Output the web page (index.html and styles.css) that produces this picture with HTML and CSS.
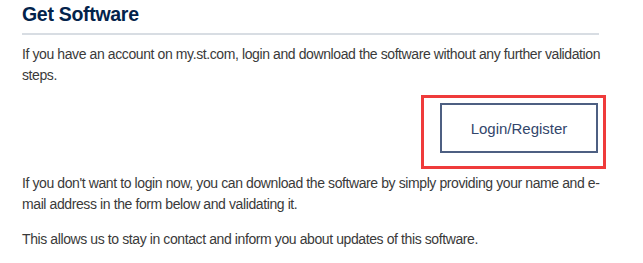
FILE: index.html
```html
<!DOCTYPE html>
<html lang="en">

<head>
    <meta charset="UTF-8">
    <meta name="viewport" content="width=device-width, initial-scale=1.0">
    <title>Get Software</title>

    <link rel="stylesheet" href="styles.css">
</head>

<body>
    <div class="section">
        <h2 class="title">Get Software</h2>

        <p class="mt-1">
            If you have an account on my.st.com, login and download the software without any further validation steps.
        </p>

        <div class="actions">
            <a href="#" class="btn-outline">
                Login/Register
                <span class="highlight"></span>
            </a>
        </div>

        <p class="mt-2">
            If you don't want to login now, you can download the software by simply providing your name and e-mail address in the form below and validating it.
        </p>

        <p class="mt-3">
            This allows us to stay in contact and inform you about updates of this software.
        </p>
    </div>
</body>

</html>
```

FILE: styles.css
```css
* {
    box-sizing: border-box;
    padding: 0;
    margin: 0;
}

body {
    background-color: white;
    font-family: "Liberation Sans", Arial, Helvetica, sans-serif;
    color: #3a3a3a;
}

.section {
    width: 612px;
    padding: 2px 0 0 22px;
}

.title {
    font-size: 19.5px;
    line-height: 24px;
    font-weight: bold;
    letter-spacing: -0.3px;
    color: #03234b;
    margin-right: 13px;
    padding-bottom: 7px;
    border-bottom: 2px solid #d8dde3;
}

p {
    font-size: 14px;
    line-height: 21px;
    letter-spacing: -0.4px;
}

.mt-1 {
    margin-top: 9px;
}

.mt-2 {
    margin-top: 20px;
}

.mt-3 {
    margin-top: 14px;
}

.actions {
    display: flex;
    justify-content: flex-end;
    margin-top: 17px;
    padding-right: 14px;
}

.btn-outline {
    position: relative;
    display: flex;
    justify-content: center;
    align-items: center;
    width: 158px;
    height: 50px;
    border: 2px solid #4d5f82;
    color: #33466b;
    font-size: 15px;
    text-decoration: none;
}

.highlight {
    position: absolute;
    left: -21px;
    top: -10px;
    width: 185px;
    height: 74px;
    border: 3px solid #ef3b3b;
}
```
